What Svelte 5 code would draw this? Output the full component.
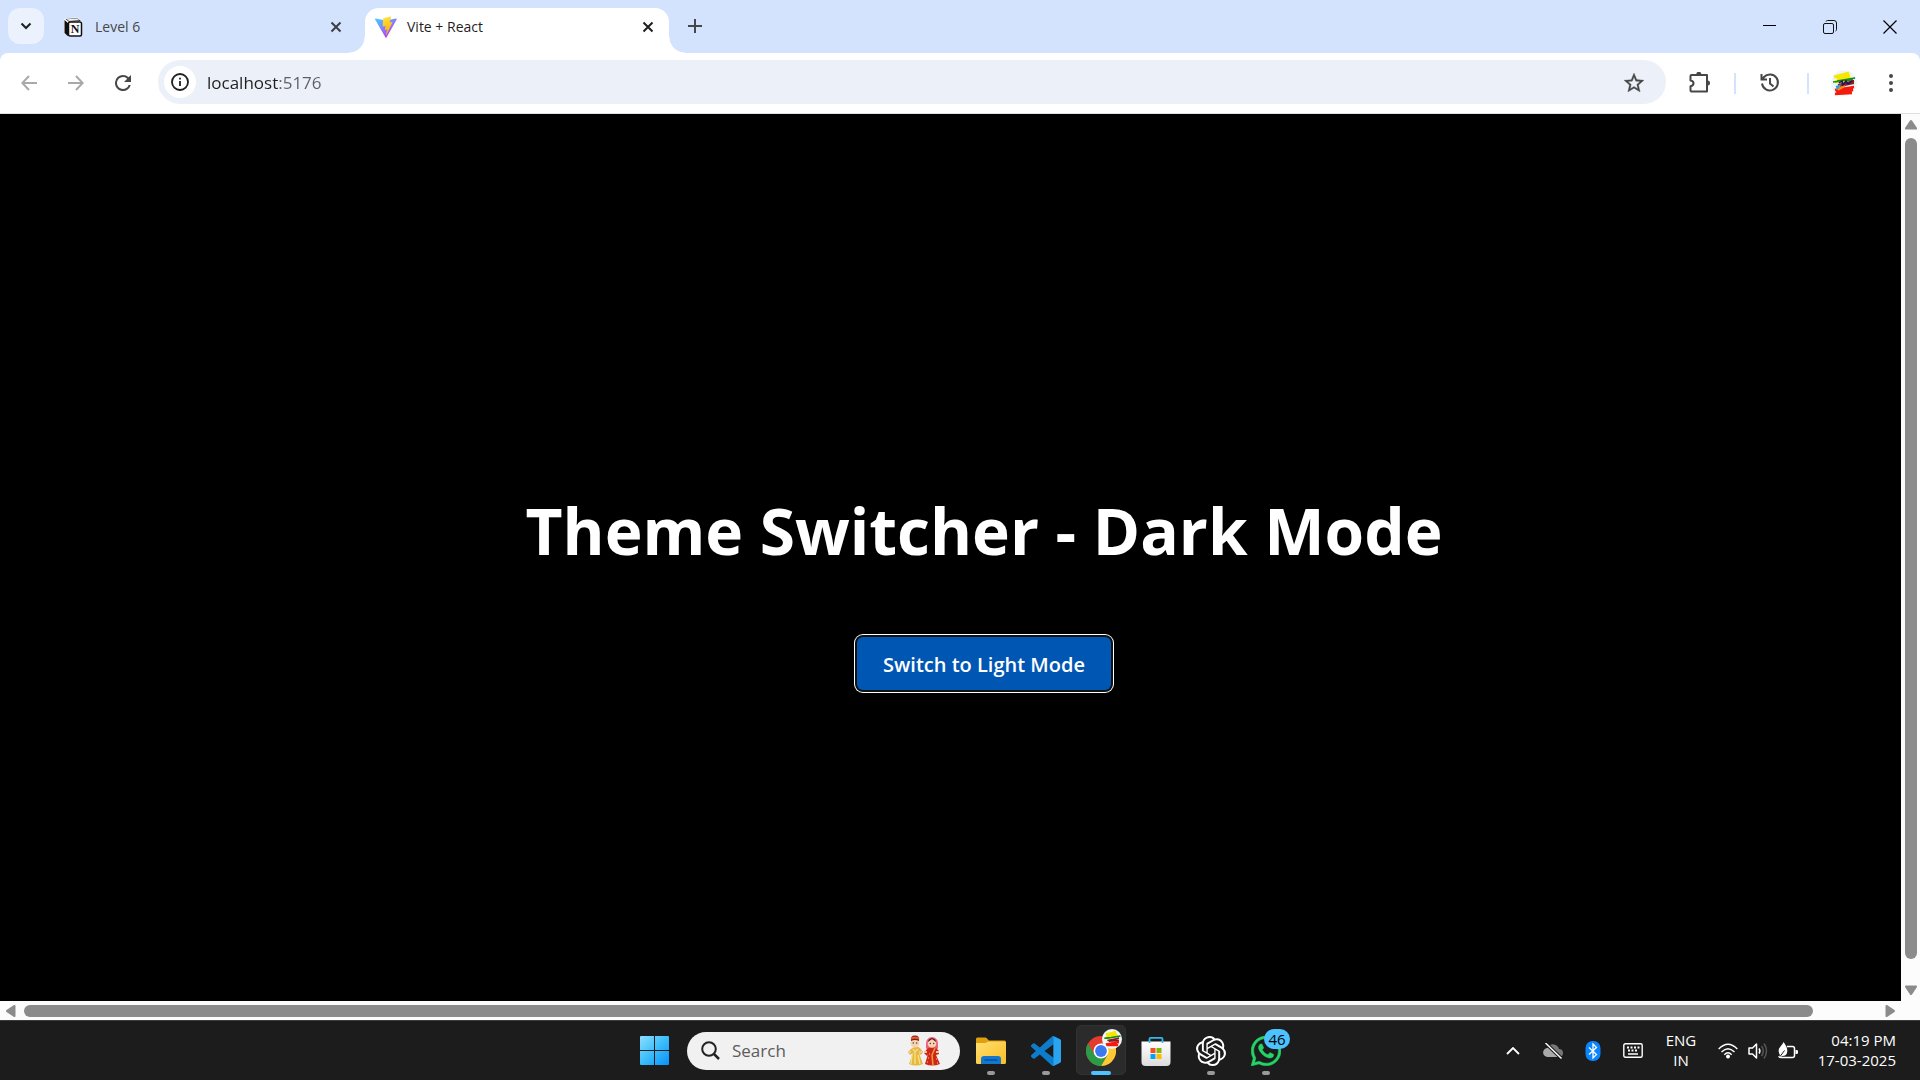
<script>
  let url = $state('localhost:5176');
  let query = $state('');
</script>

<svelte:head><title>Vite + React</title></svelte:head>

<div class="desktop">
  <header class="tabstrip">
    <button class="tab-search" aria-label="Search tabs">
      <svg viewBox="0 0 12 12" width="12" height="12"><path d="M1.500 3.500 6 8l4.500-4.500" fill="none" stroke="#1f1f1f" stroke-width="2" /></svg>
    </button>

    <div class="tab">
      <button class="tab-label">
        <svg viewBox="0 0 20 20" width="20" height="20">
          <path d="M1 3.500Q1 1.500 3 1.300L14 .6 19 4v13.500Q19 19 17 19.300L6 20 1 16z" fill="#fff" />
          <path d="M1.500 3 5 6v13.200L1.500 16zM2.500 2 14 1.200 18 4 6 4.800z" fill="#111" />
          <path d="M3.500 2.300 14 1.500l2.500 1.800L6 4z" fill="#eee" />
          <rect x="5.500" y="5" width="13" height="14" rx="1.500" fill="#fff" stroke="#111" stroke-width="1.500" />
          <text x="12" y="16" text-anchor="middle" class="notion-n">N</text>
        </svg>
        <span>Level 6</span>
      </button>
      <button class="close" aria-label="Close Level 6">
        <svg viewBox="0 0 12 12" width="12" height="12"><path d="m1.500 1.500 9 9m0-9-9 9" stroke="#3c3f44" stroke-width="2" /></svg>
      </button>
    </div>

    <div class="tab active">
      <button class="tab-label">
        <svg viewBox="0 0 22 22" width="22" height="22">
          <defs>
            <linearGradient id="viteA" x1="0" y1="0" x2=".7" y2="1"><stop offset="0" stop-color="#41d1ff" /><stop offset="1" stop-color="#bd34fe" /></linearGradient>
            <linearGradient id="viteB" x1=".4" y1="0" x2=".6" y2="1"><stop offset="0" stop-color="#ffea83" /><stop offset=".1" stop-color="#ffdd35" /><stop offset="1" stop-color="#ffa800" /></linearGradient>
          </defs>
          <path d="M21.700 3.400 11.500 21.500a.6.600 0 0 1-1 0L.1 3.400a.6.600 0 0 1 .6-.8l10.300 1.800 10-1.800a.6.600 0 0 1 .7.8z" fill="url(#viteA)" />
          <path d="M15.900.500 8.400 2a.3.300 0 0 0-.2.300l-.5 8c0 .2.200.400.400.300l2.100-.5c.2 0 .4.200.3.400l-.6 3.100c0 .2.200.400.400.300l1.300-.4c.2 0 .4.100.3.400l-1 4.900c-.1.300.3.500.5.200l6.100-12.700c.1-.2-.1-.4-.3-.4l-2.200.4c-.2 0-.4-.2-.3-.400L16.200.9a.3.300 0 0 0-.3-.4z" fill="url(#viteB)" />
        </svg>
        <span>Vite + React</span>
      </button>
      <button class="close" aria-label="Close Vite + React">
        <svg viewBox="0 0 12 12" width="12" height="12"><path d="m1.500 1.500 9 9m0-9-9 9" stroke="#1f1f1f" stroke-width="2" /></svg>
      </button>
    </div>

    <button class="new-tab" aria-label="New tab">
      <svg viewBox="0 0 14 14" width="14" height="14"><path d="M7 0v14M0 7h14" stroke="#474747" stroke-width="2" /></svg>
    </button>

    <div class="window-controls">
      <button aria-label="Minimize"><svg viewBox="0 0 14 14" width="14" height="14"><path d="M0 5.500h13" stroke="#000" /></svg></button>
      <button aria-label="Restore">
        <svg viewBox="0 0 14 14" width="14" height="14" fill="none" stroke="#111"><rect x=".5" y="3.500" width="10" height="10" rx="1.500" /><path d="M3 1.500Q3.300.5 4.500.5H11q2.500 0 2.500 2.500v6.500q0 1.200-1 1.500" /></svg>
      </button>
      <button aria-label="Close window"><svg viewBox="0 0 14 14" width="14" height="14"><path d="m.5.5 13 13m0-13-13 13" stroke="#000" stroke-width="1.200" /></svg></button>
    </div>
  </header>

  <div class="toolbar-back">
    <nav class="toolbar" aria-label="Browser">
      <div class="nav-buttons">
        <button aria-label="Back"><svg viewBox="0 0 16 16" width="16" height="16" fill="none" stroke="#a9a9a9" stroke-width="2"><path d="M16 8H1.500M8 1 1.300 8 8 15" /></svg></button>
        <button aria-label="Forward"><svg viewBox="0 0 16 16" width="16" height="16" fill="none" stroke="#a9a9a9" stroke-width="2"><path d="M0 8h14.500M8 1l6.700 7L8 15" /></svg></button>
        <button aria-label="Reload"><svg viewBox="4 4 16 16" width="16" height="16"><path d="M17.650 6.350A7.960 7.960 0 0 0 12 4a8 8 0 1 0 7.730 10h-2.080A6 6 0 1 1 12 6c1.660 0 3.140.690 4.220 1.780L13 11h7V4z" fill="#474747" /></svg></button>
      </div>

      <div class="omnibox">
        <button class="site-info" aria-label="View site information">
          <svg viewBox="0 0 18 18" width="18" height="18"><circle cx="9" cy="9" r="8" fill="none" stroke="#1f1f1f" stroke-width="1.800" /><path d="M9 8v5M9 4.800v1.800" stroke="#1f1f1f" stroke-width="1.800" /></svg>
        </button>
        <input class="url" type="text" aria-label="Address" bind:value={url} spellcheck="false" />
        <button class="star" aria-label="Bookmark this tab">
          <svg viewBox="2 2 20 19" width="20" height="19"><path d="m22 9.240-7.190-.620L12 2 9.190 8.630 2 9.240l5.460 4.730L5.820 21 12 17.270 18.180 21l-1.630-7.030zM12 15.400l-3.760 2.270 1-4.280-3.320-2.880 4.380-.380L12 6.100l1.710 4.040 4.380.380-3.320 2.880 1 4.280z" fill="#474747" stroke="#474747" stroke-width=".3" /></svg>
        </button>
      </div>

      <div class="actions">
        <button class="extensions" aria-label="Extensions">
          <svg viewBox="0 0 22 22" width="22" height="22"><path d="M2.500 3h15.500v16.500H2.500q-1 0-1-1v-4.300q3-.3 3-2.900t-3-2.900V4q0-1 1-1z" fill="none" stroke="#474747" stroke-width="2" stroke-linejoin="round" /><path d="M7.300 2.300a2.500 2.500 0 0 1 5 0zM18.500 8.500a2.500 2.500 0 0 1 0 5z" fill="#474747" /></svg>
        </button>
        <span class="divider"></span>
        <button class="history" aria-label="History">
          <svg viewBox="0 0 20 20" width="20" height="20" fill="none" stroke="#474747" stroke-width="2"><path d="M2 10.500a8 8 0 1 0 2-6.500L2 6.300M1.500 1v5.500H7M10 5v5.500l3.500 3" /></svg>
        </button>
        <span class="divider"></span>
        <button class="profile" aria-label="Profile">
          <svg viewBox="0 0 26 26" width="26" height="26">
            <circle cx="13" cy="13" r="13" fill="#edf7fb" />
            <path d="m3 7 15-4-12 6 13-3-15 6 17-3" fill="none" stroke="#f7e600" stroke-width="3" />
            <path d="m2 12 9-1 13-3-18 3 16-1" fill="none" stroke="#158b20" stroke-width="1.500" />
            <path d="m7 15 16-4-14 5 14-3" fill="none" stroke="#8b1b25" stroke-width="2" />
            <path d="m8 13 3-2 1 4 3-4 2 3 4-3" fill="none" stroke="#221458" stroke-width="1.500" />
            <path d="m4 20 19-3-18 4 17-1-18 4 17-1" fill="none" stroke="#f51b0c" stroke-width="2.500" />
            <path d="m5 19 9-3-7 4" fill="none" stroke="#f58a14" stroke-width="1.500" />
            <path d="m5 17 3-1-2 3" fill="none" stroke="#299de8" stroke-width="2" />
          </svg>
        </button>
        <button class="menu" aria-label="Menu"><svg viewBox="0 0 4 18" width="4" height="18" fill="#474747"><circle cx="2" cy="2" r="2" /><circle cx="2" cy="9" r="2" /><circle cx="2" cy="16" r="2" /></svg></button>
      </div>
    </nav>
  </div>

  <div class="viewport">
    <main>
      <h1>Theme Switcher - Dark Mode</h1>
      <button class="switch">Switch to Light Mode</button>
    </main>
    <div class="vbar">
      <svg viewBox="0 0 12 10" width="12" height="10"><path d="M6 0q.6 0 1 .5l5 7.500q.3 1.500-1 1.500H1Q-.3 9.500 0 8L5 .5Q5.400 0 6 0z" fill="#8b8b8b" /></svg>
      <span class="vthumb"></span>
      <svg viewBox="0 0 12 10" width="12" height="10"><path d="M6 10q.6 0 1-.5L12 2q.3-1.500-1-1.500H1Q-.3.5 0 2l5 7.500q.4.500 1 .5z" fill="#8b8b8b" /></svg>
    </div>
    <div class="hbar">
      <svg viewBox="0 0 10 12" width="10" height="12"><path d="M0 6q0-.6.5-1L8 0q1.500-.3 1.500 1v10q0 1.300-1.500 1L.5 7Q0 6.600 0 6z" fill="#8b8b8b" /></svg>
      <span class="hthumb"></span>
      <svg viewBox="0 0 10 12" width="10" height="12"><path d="M10 6q0-.6-.5-1L2 0Q.5-.3.5 1v10q0 1.300 1.500 1l7.500-5q.5-.4.500-1z" fill="#8b8b8b" /></svg>
    </div>
    <span class="corner"></span>
  </div>

  <footer class="taskbar">
    <div class="pinned">
      <button class="app" aria-label="Start">
        <svg viewBox="0 0 29 29" width="29" height="29">
          <defs><linearGradient id="win" x1="0" y1="0" x2="29" y2="29" gradientUnits="userSpaceOnUse"><stop offset="0" stop-color="#8be0ff" /><stop offset=".5" stop-color="#3cbdfa" /><stop offset="1" stop-color="#0791fb" /></linearGradient></defs>
          <path d="M1 0h13v14H0V1q0-1 1-1zM15 0h13q1 0 1 1v13H15zM0 15h14v14H1q-1 0-1-1zM15 15h14v13q0 1-1 1H15z" fill="url(#win)" />
        </svg>
      </button>

      <label class="search">
        <svg viewBox="0 0 19 19" width="19" height="19" fill="none" stroke="#222"><circle cx="8" cy="8" r="6.800" stroke-width="2" /><path d="m13 13 5 5" stroke-width="2.500" /></svg>
        <input type="text" placeholder="Search" aria-label="Search" bind:value={query} />
        <svg viewBox="0 0 32 31" width="32" height="31">
          <path d="m3 14-3 3 2 3 3-2-4 11q7 3 14 0l-4-11 2 2 2-3-3-4q-4-3-9 1z" fill="#e5b93e" />
          <path d="m5 14 2 3 3-3M7 17v12M4 20 3 29M10 20l2 9" fill="none" stroke="#f7e08b" stroke-width="1.300" />
          <circle cx="7" cy="8" r="4.500" fill="#f7d3b3" />
          <path d="M3 6Q2 .5 7 .5T11 6Q7 4 3 6z" fill="#6b2417" /><path d="M3 4.500q4-1.500 8 0V2.500Q7 .5 3 2.500z" fill="#f05327" />
          <circle cx="5.300" cy="8" r=".7" fill="#432" /><circle cx="8.700" cy="8" r=".7" fill="#432" />
          <path d="M18 13q-1-11 6-11t6 11l-2 3h-8z" fill="#ef5d7b" />
          <path d="m19 14-3 4 3 3 1-2-3 10q7 3 15 0l-4-9 3-1 0-3-3-3q-5-2-9 1z" fill="#ce2719" />
          <circle cx="24" cy="8.500" r="4.300" fill="#f7d3b3" /><path d="M20 7q0-3 4-4 4 1 4 4l-4-3z" fill="#4a1f1b" />
          <circle cx="22.300" cy="8.500" r=".7" fill="#432" /><circle cx="25.700" cy="8.500" r=".7" fill="#432" />
          <path d="m27 13-3 7 1 10" fill="none" stroke="#ef9d32" stroke-width="1.500" />
          <path d="M20 23h1m-2 4h1m8-3h1m0 4h1m-9-9h1" stroke="#ffc36e" />
          <path d="M0 17h3M11 17h3M16 17h3M28 17h3" stroke="#f7c69e" stroke-width="2" />
        </svg>
      </label>

      <button class="app running" aria-label="File Explorer">
        <svg viewBox="0 0 30 30" width="30" height="30">
          <defs><linearGradient id="fold" x1="0" y1="0" x2="1" y2="1"><stop offset="0" stop-color="#ffdf70" /><stop offset="1" stop-color="#fbbd25" /></linearGradient></defs>
          <path d="M0 3q0-1.500 1.500-1.500h7.500q1.200 0 2 1l2 2h15.500q1.500 0 1.500 1.500V9H0z" fill="#dea00d" />
          <path d="M0 7h9q1 0 2-.8l1.500-.7h16Q30 5.500 30 7v19.500q0 1.500-1.500 1.500h-27Q0 28 0 26.500z" fill="url(#fold)" />
          <path d="M5 28v-5q0-3 3-3h14q3 0 3 3v5z" fill="#1477cf" /><path d="M8.500 24h13" stroke="#0b4a8f" stroke-width="1.300" />
        </svg>
      </button>
      <button class="app running" aria-label="Visual Studio Code">
        <svg viewBox="0 0 24 24" width="30" height="30">
          <path d="M23.150 2.587L18.210.210a1.494 1.494 0 0 0-1.705.290l-9.460 8.630-4.120-3.128a.999.999 0 0 0-1.276.057L.327 7.261A1 1 0 0 0 .326 8.740L3.899 12 .326 15.260a1 1 0 0 0 .001 1.479L1.650 17.940a.999.999 0 0 0 1.276.057l4.120-3.128 9.460 8.630a1.492 1.492 0 0 0 1.704.290l4.942-2.377A1.500 1.500 0 0 0 24 20.060V3.939a1.500 1.500 0 0 0-.850-1.352zm-5.146 14.861L10.826 12l7.178-5.448v10.896z" fill="#0d7dcb" />
          <path d="m18 .1 5.150 2.487q.85.500.85 1.352v16.121q0 .9-.85 1.352L18 23.900z" fill="#2ba4ef" />
        </svg>
      </button>
      <button class="app running current" aria-label="Google Chrome">
        <svg viewBox="0 0 30 30" width="30" height="30">
          <circle cx="15" cy="15" r="15" fill="#e33b2e" />
          <path d="M2 7.500 8.500 18.750 15 22.500 15 30A15 15 0 0 1 2 7.500z" fill="#2b9b46" />
          <path d="M15 7.500h13A15 15 0 0 1 15 30l6.500-11.250z" fill="#fcc934" />
          <path d="m8.500 18.750 6.500 3.700 6.500-3.700L15 30l-3-.3z" fill="#2b9b46" />
          <circle cx="15" cy="15" r="7.500" fill="#fff" /><circle cx="15" cy="15" r="5.900" fill="#3d79ee" />
        </svg>
        <svg class="mini-avatar" viewBox="0 0 26 26" width="20" height="20">
          <circle cx="13" cy="13" r="13" fill="#edf7fb" />
          <path d="m5 7 13-3-12 5 13-3-15 6 17-3" fill="none" stroke="#f7e600" stroke-width="3" />
          <path d="m3 12 9-1 12-2-17 3" fill="none" stroke="#158b20" stroke-width="2" />
          <path d="m7 15 15-3-13 4 13-1" fill="none" stroke="#8b1b25" stroke-width="2" />
          <path d="m5 20 17-3-16 4 15 0" fill="none" stroke="#f51b0c" stroke-width="3" />
        </svg>
      </button>
      <button class="app" aria-label="Microsoft Store">
        <svg viewBox="0 0 30 30" width="30" height="30">
          <defs><linearGradient id="store" x1="0" y1="0" x2="0" y2="1"><stop offset="0" stop-color="#fff" /><stop offset="1" stop-color="#dcdcdc" /></linearGradient></defs>
          <path d="M8.500 7V3q0-1.200 1.200-1.200h10.600q1.200 0 1.200 1.200v4" fill="none" stroke="#32b9ed" stroke-width="1.800" />
          <path d="M.5 5.500h29V26q0 4-4 4h-21q-4 0-4-4z" fill="url(#store)" />
          <path d="M9.500 12H14.500v5H9.500z" fill="#f25022" /><path d="M15.500 12h5v5h-5z" fill="#7fba00" /><path d="M9.500 18h5v5h-5z" fill="#00a4ef" /><path d="M15.500 18h5v5h-5z" fill="#ffb900" />
          <path d="M8.500 5v2M21.500 5v2" stroke="#32b9ed" stroke-width="1.800" />
        </svg>
      </button>
      <button class="app running" aria-label="ChatGPT">
        <svg viewBox="0 0 24 24" width="30" height="30"><path fill="#fff" d="M22.2819 9.8211a5.9847 5.9847 0 0 0-.5157-4.9108 6.0462 6.0462 0 0 0-6.5098-2.9A6.0651 6.0651 0 0 0 4.9807 4.1818a5.9847 5.9847 0 0 0-3.9977 2.9 6.0462 6.0462 0 0 0 .7427 7.0966 5.98 5.98 0 0 0 .511 4.9107 6.051 6.051 0 0 0 6.5146 2.9001A5.9847 5.9847 0 0 0 13.2599 24a6.0557 6.0557 0 0 0 5.7718-4.2058 5.9894 5.9894 0 0 0 3.9977-2.9001 6.0557 6.0557 0 0 0-.7475-7.0729zm-9.022 12.6081a4.4755 4.4755 0 0 1-2.8764-1.0408l.1419-.0804 4.7783-2.7582a.7948.7948 0 0 0 .3927-.6813v-6.7369l2.02 1.1686a.071.071 0 0 1 .038.052v5.5826a4.504 4.504 0 0 1-4.4945 4.4944zm-9.6607-4.1254a4.4708 4.4708 0 0 1-.5346-3.0137l.142.0852 4.783 2.7582a.7712.7712 0 0 0 .7806 0l5.8428-3.3685v2.3324a.0804.0804 0 0 1-.0332.0615L9.74 19.9502a4.4992 4.4992 0 0 1-6.1408-1.6464zM2.3408 7.8956a4.485 4.485 0 0 1 2.3655-1.9728V11.6a.7664.7664 0 0 0 .3879.6765l5.8144 3.3543-2.0201 1.1685a.0757.0757 0 0 1-.071 0l-4.8303-2.7865A4.504 4.504 0 0 1 2.3408 7.872zm16.5963 3.8558L13.1038 8.364 15.1192 7.2a.0757.0757 0 0 1 .071 0l4.8303 2.7913a4.4944 4.4944 0 0 1-.6765 8.1042v-5.6772a.79.79 0 0 0-.407-.667zm2.0107-3.0231l-.142-.0852-4.7735-2.7818a.7759.7759 0 0 0-.7854 0L9.409 9.2297V6.8974a.0662.0662 0 0 1 .0284-.0615l4.8303-2.7866a4.4992 4.4992 0 0 1 6.6802 4.66zM8.3065 12.863l-2.02-1.1638a.0804.0804 0 0 1-.038-.0567V6.0742a4.4992 4.4992 0 0 1 7.3757-3.4537l-.142.0805L8.704 5.459a.7948.7948 0 0 0-.3927.6813zm1.0976-2.3654l2.602-1.4998 2.6069 1.4998v2.9994l-2.5974 1.4997-2.6067-1.4997Z" /></svg>
      </button>
      <button class="app running" aria-label="WhatsApp, 46 unread">
        <svg viewBox="0 0 24 24" width="30" height="30"><path fill="#25d366" stroke="#25d366" stroke-width=".4" d="M17.472 14.382c-.297-.149-1.758-.867-2.03-.967-.273-.099-.471-.148-.67.15-.197.297-.767.966-.94 1.164-.173.199-.347.223-.644.075-.297-.15-1.255-.463-2.39-1.475-.883-.788-1.48-1.761-1.653-2.059-.173-.297-.018-.458.13-.606.134-.133.298-.347.446-.52.149-.174.198-.298.298-.497.099-.198.05-.371-.025-.52-.075-.149-.669-1.612-.916-2.207-.242-.579-.487-.5-.669-.51-.173-.008-.371-.01-.57-.01-.198 0-.52.074-.792.372-.272.297-1.04 1.016-1.04 2.479 0 1.462 1.065 2.875 1.213 3.074.149.198 2.096 3.2 5.077 4.487.709.306 1.262.489 1.694.625.712.227 1.36.195 1.871.118.571-.085 1.758-.719 2.006-1.413.248-.694.248-1.289.173-1.413-.074-.124-.272-.198-.57-.347m-5.421 7.403h-.004a9.87 9.87 0 01-5.031-1.378l-.361-.214-3.741.982.998-3.648-.235-.374a9.86 9.86 0 01-1.51-5.26c.001-5.45 4.436-9.884 9.888-9.884 2.64 0 5.122 1.03 6.988 2.898a9.825 9.825 0 012.893 6.994c-.003 5.45-4.437 9.884-9.885 9.884m8.413-18.297A11.815 11.815 0 0012.05 0C5.495 0 .16 5.335.157 11.892c0 2.096.547 4.142 1.588 5.945L.057 24l6.305-1.654a11.882 11.882 0 005.683 1.448h.005c6.554 0 11.89-5.335 11.893-11.893a11.821 11.821 0 00-3.48-8.413Z" /></svg>
        <span class="badge">46</span>
      </button>
    </div>

    <div class="tray">
      <button class="tray-item" aria-label="Show hidden icons"><svg viewBox="0 0 14 8" width="14" height="8"><path d="m1 7 6-6 6 6" fill="none" stroke="#fff" stroke-width="1.800" /></svg></button>
      <button class="tray-item" aria-label="OneDrive, not signed in">
        <svg viewBox="0 0 20 16" width="20" height="16"><path d="M5 14a4.500 4.500 0 0 1-.5-9Q7 .5 11 1.500q4 .5 5 4.500a4 4 0 0 1 0 8z" fill="#777" /><path d="M5 14a4.500 4.500 0 0 1-.5-9q3-.5 5 2l8 6.500-1.500.5z" fill="#a9a9a9" /><path d="m2.500 0 16 15.500" stroke="#1c1c1c" stroke-width="3.500" /><path d="m2.500 0 16 15.500" stroke="#fff" stroke-width="1.400" /></svg>
      </button>
      <button class="tray-item" aria-label="Bluetooth">
        <svg viewBox="0 0 16 20" width="16" height="20"><rect x=".5" width="15" height="20" rx="7" fill="#0a84ff" /><path d="m4 6.500 7.500 7L8 17V3l3.500 3.500L4 13.500" fill="none" stroke="#fff" stroke-width="1.300" /></svg>
      </button>
      <button class="tray-item" aria-label="Touch keyboard">
        <svg viewBox="0 0 20 15" width="20" height="15"><rect x=".8" y=".8" width="18.400" height="13.400" rx="1.500" fill="none" stroke="#fff" stroke-width="1.400" /><path d="M4 4.500h2m1.500 0h2m1.500 0h2m1.500 0h2M5 7.500h2m1.500 0h2m1.500 0h2" stroke="#fff" stroke-width="1.800" /><path d="M5 11h10" stroke="#fff" stroke-width="1.500" /></svg>
      </button>
      <button class="lang"><span>ENG</span><span>IN</span></button>
      <button class="status" aria-label="Network, volume and battery">
        <svg viewBox="0 0 20 16" width="20" height="16" fill="none" stroke="#fff" stroke-width="1.400"><path d="M.7 6q9.300-9.500 18.600 0M3.500 9q6.500-6.500 13 0M6.300 11.700q3.700-3.700 7.400 0" /><circle cx="10" cy="13.500" r="1.300" fill="#fff" /></svg>
        <svg viewBox="0 0 20 18" width="20" height="18" fill="none" stroke-width="1.500"><path d="M1 6h3.500L8.500 2v14l-4-4H1z" stroke="#fff" stroke-linejoin="round" /><path d="M11 6.500q1.800 2.500 0 5" stroke="#fff" /><path d="M13.500 4q3.600 5 0 10M16 1.500q5 7.500 0 15" stroke="#555" /></svg>
        <svg viewBox="0 0 20 18" width="20" height="18"><path d="M9 4.500h5.500q2 0 2 2v7q0 2-2 2H3q-2 0-2-1.500" fill="none" stroke="#fff" stroke-width="1.500" /><path d="M17.500 8h1.200q1.300 0 1.300 1.300v1.400Q20 12 18.700 12h-1.200z" fill="#fff" /><path d="M5.500 0q4 5 3.800 9.500Q9 14 4 14l-2 2-1-1 1-2Q-1 8 2.500 4.500q2-1.800 3-4.500z" fill="#fff" /><path d="m2 14.500 4.500-6" stroke="#1c1c1c" /></svg>
      </button>
      <button class="clock"><span>04:19 PM</span><span>17-03-2025</span></button>
    </div>
  </footer>
</div>

<style>
  :global(body) { margin: 0; background: #000; }
  .desktop {
    display: flex;
    flex-direction: column;
    min-height: 100vh;
    overflow: hidden;
    font-family: "Open Sans", "Noto Sans", sans-serif;
    color: #1f1f1f;
  }
  button { font: inherit; color: inherit; background: none; border: 0; padding: 0; margin: 0; display: flex; align-items: center; justify-content: center; }
  input { font: inherit; border: 0; padding: 0; background: none; outline: 0; min-width: 0; }
  svg { display: block; flex: none; }

  .tabstrip { display: flex; height: 53px; background: #d3e3fd; font-size: 14px; }
  .tab-search { width: 36px; height: 36px; margin: 8px 0 0 8px; border-radius: 12px; background: #ebf1fd; }
  .tab { display: flex; align-items: center; width: 304px; height: 45px; margin-top: 8px; box-sizing: border-box; padding: 0 14px 8px 10px; color: #474747; }
  .tab:not(.active) { margin-left: 9px; }
  .tab-label { flex: 1; justify-content: flex-start; gap: 10px; height: 36px; }
  .tab.active { position: relative; margin-left: 8px; background: #fff; border-radius: 14px 14px 0 0; color: #1f1f1f; }
  .tab.active::before, .tab.active::after { content: ""; position: absolute; bottom: 0; width: 16px; height: 16px; }
  .tab.active::before { right: 100%; background: radial-gradient(circle at 0 0, transparent 15px, #fff 16px); }
  .tab.active::after { left: 100%; background: radial-gradient(circle at 100% 0, transparent 15px, #fff 16px); }
  .tab:not(.active) .tab-label { gap: 12px; }
  .close { width: 14px; height: 36px; }
  .notion-n { font: bold 12px "Liberation Serif", serif; fill: #111; }
  .new-tab { width: 36px; height: 36px; margin: 8px 0 0 8px; }
  .window-controls { display: flex; margin-left: auto; }
  .window-controls button { width: 60px; height: 53px; }

  .toolbar-back { background: #d3e3fd; }
  .toolbar { display: flex; align-items: center; height: 60px; border-bottom: 1px solid #dcdfe4; border-radius: 8px 8px 0 0; background: #fff; }
  .nav-buttons { display: flex; padding: 0 12px 0 5px; }
  .nav-buttons button { width: 47px; height: 44px; }
  .omnibox { display: flex; align-items: center; flex: 1; box-sizing: border-box; height: 44px; padding: 0 22px 0 6px; margin-bottom: 2px; border-radius: 22px; background: #ecf0f9; }
  .site-info { width: 32px; height: 32px; border-radius: 50%; background: #fff; }
  .url { flex: 1; margin-left: 11px; height: 32px; font-size: 17px; color: transparent; caret-color: #1f1f1f; background: linear-gradient(90deg, #1f1f1f 72px, #5b5e63 72px); background-clip: text; -webkit-background-clip: text; }
  .actions { display: flex; align-items: center; }
  .extensions { width: 22px; margin: 0 23px; }
  .divider { width: 2px; height: 21px; background: #d3e3fd; }
  .history { width: 20px; margin: 0 27px 0 24px; }
  .profile { width: 26px; margin: 0 32px 0 22px; }
  .menu { width: 4px; margin-right: 27px; }

  .viewport { flex: 1; display: grid; grid-template-columns: minmax(0, 1fr) 19px; grid-template-rows: minmax(0, 1fr) 19px; background: #fcfcfc; }
  main { display: flex; flex-direction: column; align-items: center; justify-content: center; gap: 61px; padding: 60px 0 0 67px; background: #000; color: #fff; }
  h1 { margin: 0; font-size: 64px; line-height: 90px; font-weight: 700; white-space: nowrap; }
  .switch { min-width: 254px; height: 53px; padding: 2px 24px 0; border-radius: 6px; background: #0056b3; color: #fff; font-size: 20px; font-weight: 600; box-shadow: 0 0 0 2px #101010, 0 0 0 3px #fff; }
  .vbar { display: flex; flex-direction: column; align-items: center; padding: 6px 0; }
  .vthumb { flex: 1; width: 12px; margin: 8px 0 26px; border-radius: 6px; background: #8b8b8b; }
  .hbar { display: flex; align-items: center; padding: 0 6px; }
  .hthumb { flex: 1; height: 12px; margin: 0 72px 0 8px; border-radius: 6px; background: #8b8b8b; }

  .taskbar { display: grid; grid-template-columns: 1fr auto 1fr; height: 59px; border-top: 1px solid #3a3c3c; background: #1c1c1c; color: #fff; }
  .pinned { grid-column: 2; display: flex; align-items: center; }
  .app { position: relative; width: 55px; height: 59px; }
  .search { display: flex; align-items: center; box-sizing: border-box; width: 273px; height: 38px; margin: 0 3px 0 5px; padding: 0 20px 0 14px; border-radius: 19px; background: #f1f1f1; color: #222; }
  .search input { flex: 1; margin-left: 12px; font-size: 17px; }
  .search input::placeholder { color: #5c5c5c; opacity: 1; }
  .running::after { content: ""; position: absolute; bottom: 5px; left: 24px; width: 8px; height: 4px; border-radius: 2px; background: #999; }
  .current::before { content: ""; position: absolute; inset: 4px 2px 5px 3px; border-radius: 5px; background: #2b2b2b; border: 1px solid #323232; box-sizing: border-box; }
  .current svg { position: relative; }
  .current::after { left: 18px; width: 20px; background: #4cc2ff; }
  .current .mini-avatar { position: absolute; top: 8px; right: 6px; }
  .badge { position: absolute; top: 8px; right: 3px; width: 26px; height: 20px; border-radius: 10px; background: #4cc2ff; color: #000; font-size: 15px; line-height: 20px; text-align: center; }
  .tray { display: flex; align-items: center; justify-content: flex-end; padding-right: 24px; font-size: 15px; line-height: 20px; white-space: nowrap; }
  .tray-item { width: 40px; height: 40px; }
  .lang { flex-direction: column; width: 56px; padding-bottom: 2px; }
  .status { gap: 10px; padding: 0 19px 0 9px; }
  .clock { flex-direction: column; align-items: flex-end; width: 79px; padding-bottom: 2px; }
</style>
